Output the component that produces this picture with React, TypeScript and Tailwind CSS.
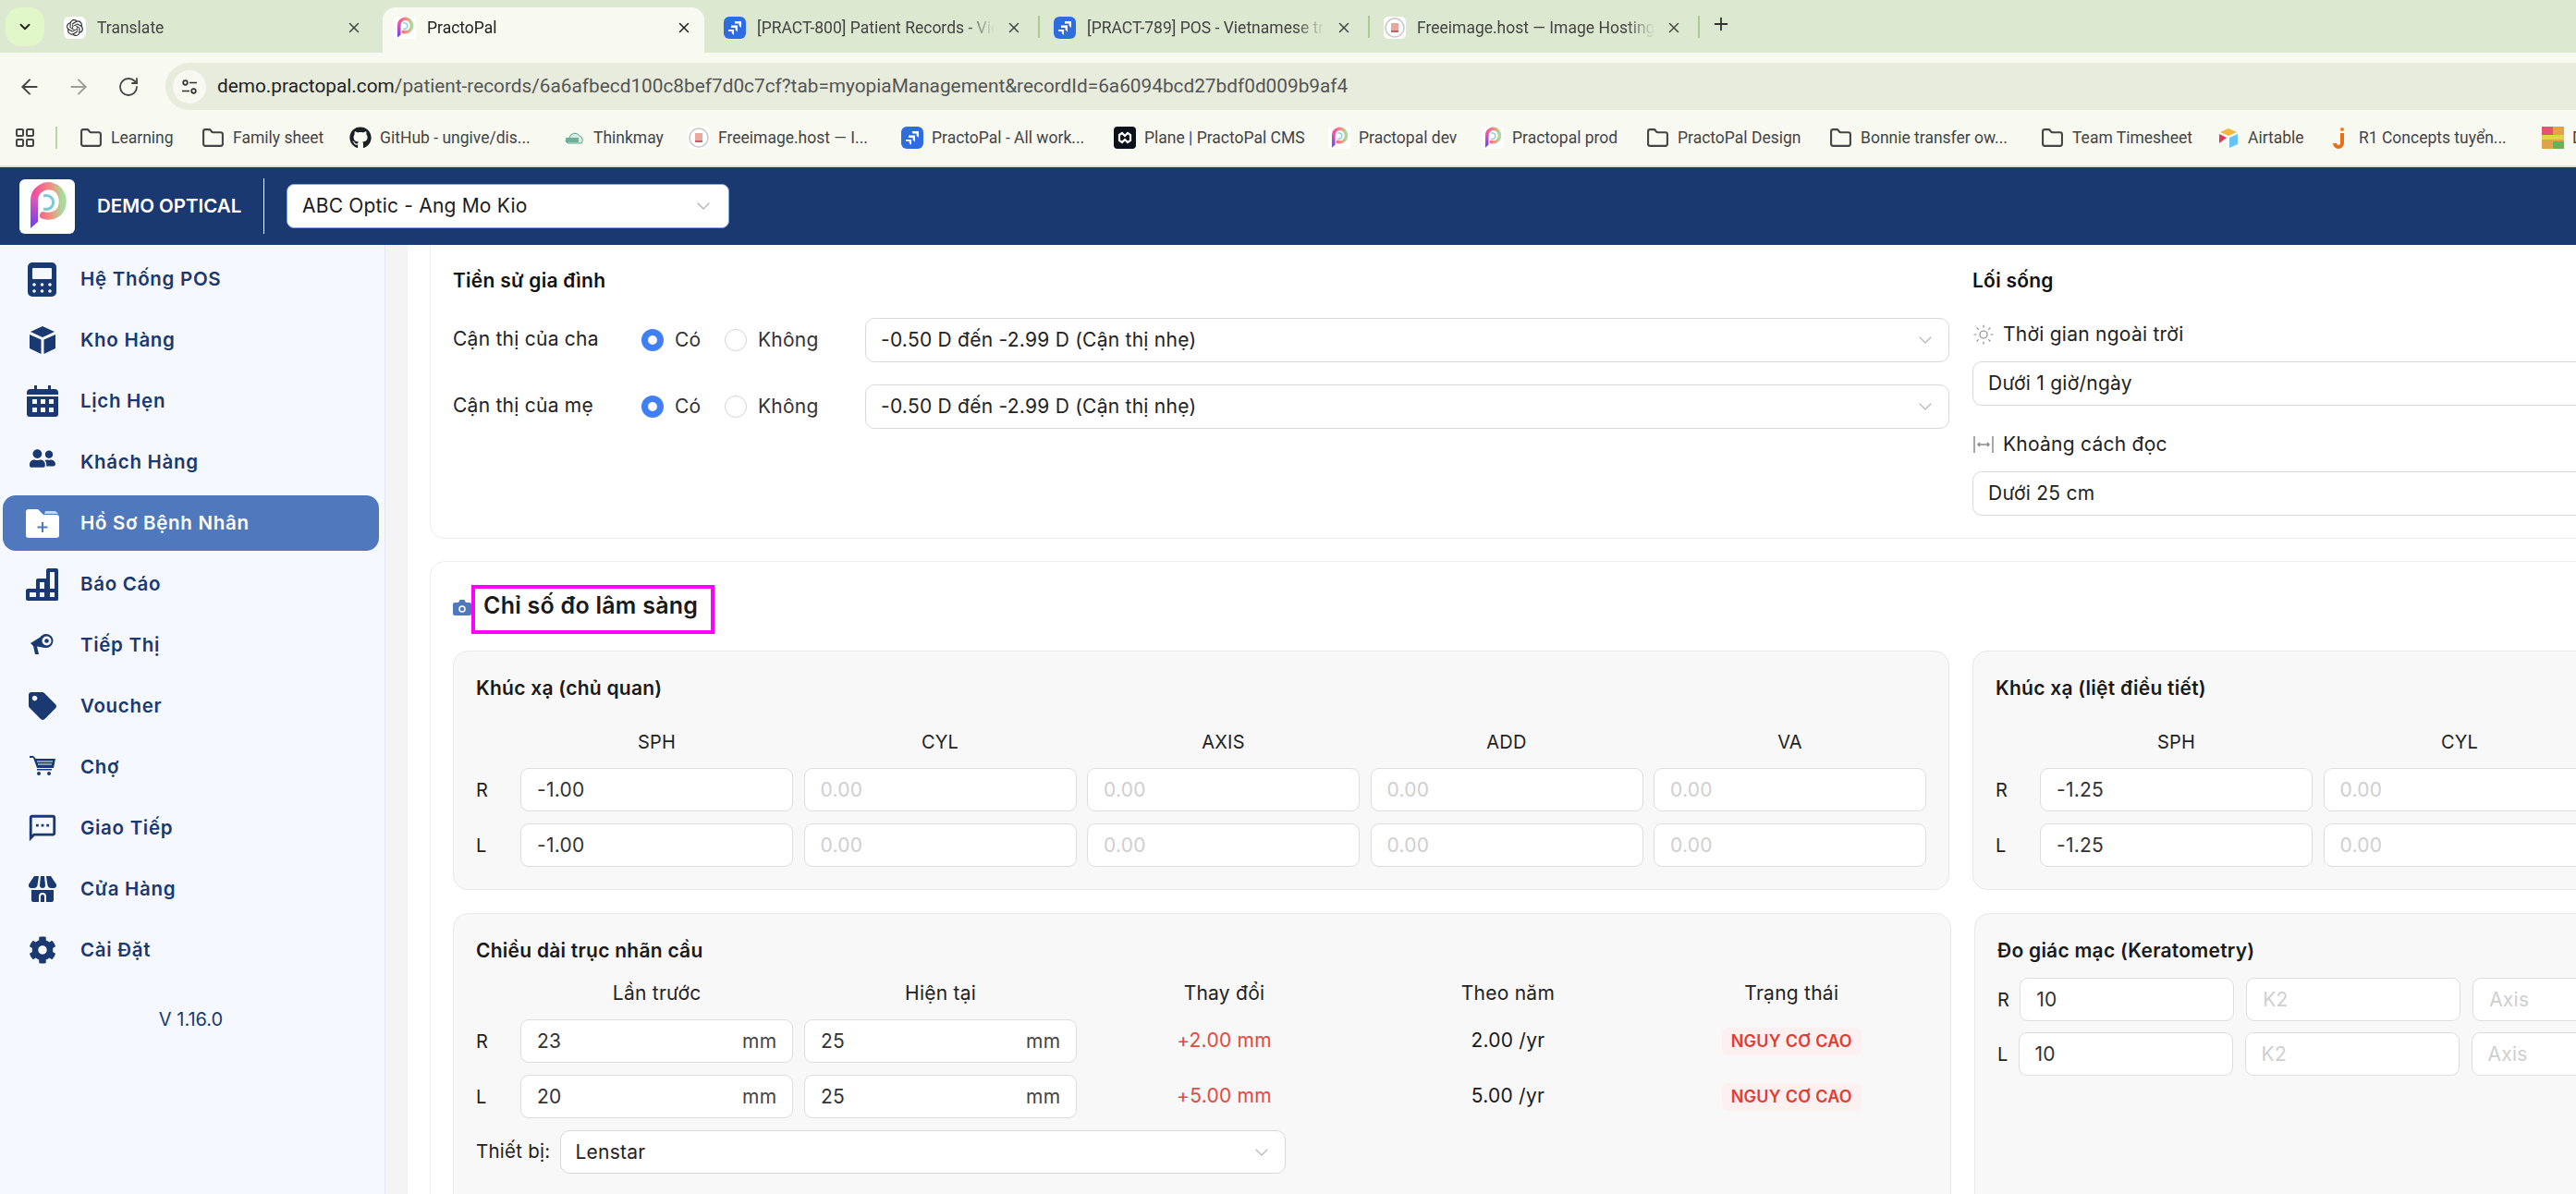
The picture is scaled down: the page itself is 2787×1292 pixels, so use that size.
import React from "react";
import { ArrowLeft, ArrowRight, ChevronDown, Folder, LayoutGrid, Plus, RotateCw, Sun, X } from "lucide-react";
import { FaCog, FaGithub, FaTag, FaUserFriends } from "react-icons/fa";
import { MdOutlineSms } from "react-icons/md";
import { SiOpenai } from "react-icons/si";

const NAVY = "#1a3970";

function PLogo({ className = "" }: { className?: string }) {
  const id = React.useId().replace(/:/g, "");
  return (
    <svg viewBox="9 3 42 54" className={className}>
      <defs>
        <linearGradient id={`a${id}`} x1="0" y1="0" x2="1" y2="0">
          <stop offset="0" stopColor="#ef4f9f" />
          <stop offset="0.55" stopColor="#f58c7b" />
          <stop offset="1" stopColor="#a6dc9b" />
        </linearGradient>
        <linearGradient id={`b${id}`} x1="0" y1="0" x2="0" y2="1">
          <stop offset="0" stopColor="#e45ab1" />
          <stop offset="1" stopColor="#6d3df0" />
        </linearGradient>
      </defs>
      <path d="M16 24C16 12 28 6 36 9C46 12 49 24 45 33C42 40 33 42 26 40" fill="none" stroke={`url(#a${id})`} strokeWidth="8" strokeLinecap="round" />
      <path d="M26 19C34 17 38 23 36 29C34 33 30 34 26 33" fill="none" stroke="#7dc9d8" strokeWidth="3" />
      <path d="M12 24C12 18 20 18 20 24L20 47L12 54Z" fill={`url(#b${id})`} />
    </svg>
  );
}

function JiraIcon() {
  return (
    <svg viewBox="0 0 24 24" className="h-[24px] w-[24px] shrink-0">
      <rect width="24" height="24" rx="6" fill="#2f6ce0" />
      <path d="M12 5h7v7l-2.400-2.200V7.400H12zM8 9.500h7v7l-2.400-2.200v-2.400H8zM5 14h6v6l-2.200-2v-2H5z" fill="#fff" />
    </svg>
  );
}

function FreeImg() {
  return (
    <svg viewBox="0 0 24 24" className="h-[24px] w-[24px] shrink-0">
      <rect width="24" height="24" rx="5" fill="#fff" />
      <circle cx="12" cy="12" r="10" fill="#fff" stroke="#c9c9c9" strokeWidth="1.500" />
      <rect x="8" y="7" width="8" height="10" fill="#e8a8a0" />
      <rect x="8" y="15" width="8" height="2" fill="#b66" />
    </svg>
  );
}

function PFav() {
  return (
    <span className="flex h-[24px] w-[24px] shrink-0 items-center justify-center rounded-[4px] bg-white">
      <PLogo className="h-[24px] w-[20px]" />
    </span>
  );
}

const tabs = [
  { t: "Translate", i: <span className="flex h-[24px] w-[24px] shrink-0 items-center justify-center rounded-[6px] bg-white"><SiOpenai size={18} color="#333" /></span> },
  { t: "PractoPal", i: <PFav />, active: true },
  { t: "[PRACT-800] Patient Records - Vietnamese", i: <JiraIcon />, sep: true },
  { t: "[PRACT-789] POS - Vietnamese translation", i: <JiraIcon />, sep: true },
  { t: "Freeimage.host — Image Hosting", i: <FreeImg />, sep: true },
];

function TabStrip() {
  return (
    <div className="flex h-[57px] shrink-0 items-start bg-[#dce8d0] pt-[8px] pl-[6px]">
      <div className="mr-[9px] flex h-[42px] w-[42px] shrink-0 items-center justify-center rounded-[16px] bg-[#e2f7c9]">
        <ChevronDown size={18} strokeWidth={2.5} color="#222" />
      </div>
      {tabs.map((tab) => (
        <React.Fragment key={tab.t}>
          <div className={`flex h-[49px] w-[348px] shrink-0 items-center gap-[12px] rounded-t-[14px] pr-[13px] pb-[5px] pl-[12px] ${tab.active ? "bg-[#f8faf2]" : ""}`}>
            {tab.i}
            <span className={`min-w-0 flex-1 overflow-hidden text-[17.500px] whitespace-nowrap [font-family:Roboto,sans-serif] [mask-image:linear-gradient(to_right,black_88%,transparent)] ${tab.active ? "text-[#222]" : "text-[#444]"}`}>{tab.t}</span>
            <X size={18} strokeWidth={2} color={tab.active ? "#222" : "#444"} />
          </div>
          <div className="flex h-[33px] w-[9px] shrink-0 items-center justify-center pt-[9px]">
            {tab.sep && <div className="h-[24px] w-[2px] bg-[#a9cd8f]" />}
          </div>
        </React.Fragment>
      ))}
      <div className="ml-[9px] flex h-[33px] items-center pt-[3px]">
        <Plus size={22} strokeWidth={2} color="#333" />
      </div>
    </div>
  );
}

function Toolbar() {
  return (
    <div className="flex h-[62px] shrink-0 items-start bg-[#f8faf2] pt-[11px]">
      <div className="flex h-[51px] w-[179px] shrink-0 items-center pl-[19px]">
        <ArrowLeft size={26} strokeWidth={1.8} color="#444" />
        <ArrowRight size={26} strokeWidth={1.8} color="#9aa095" className="ml-[27px]" />
        <RotateCw size={24} strokeWidth={1.8} color="#444" className="ml-[29px]" />
      </div>
      <div className="flex h-[51px] flex-1 items-center rounded-l-full bg-[#e7ecdd] pl-[8px]">
        <span className="flex h-[36px] w-[36px] items-center justify-center rounded-full bg-[#f8faf2]">
          <svg viewBox="0 0 20 20" className="h-[20px] w-[20px]" fill="none" stroke="#333" strokeWidth="1.700">
            <circle cx="5.500" cy="5.500" r="2.300" />
            <path d="M10 5.500h8M2 14.500h8" />
            <circle cx="14.500" cy="14.500" r="2.300" />
          </svg>
        </span>
        <span className="ml-[12px] text-[20.800px] whitespace-nowrap text-[#222] [font-family:Roboto,sans-serif]">
          demo.practopal.com<span className="text-[#555]">/patient-records/6a6afbecd100c8bef7d0c7cf?tab=myopiaManagement&recordId=6a6094bcd27bdf0d009b9af4</span>
        </span>
      </div>
    </div>
  );
}

const folder = <Folder size={25} strokeWidth={2} color="#444" className="shrink-0" />;

const bookmarks = [
  { w: "w-[132px]", i: folder, t: "Learning" },
  { w: "w-[160px]", i: folder, t: "Family sheet" },
  { w: "w-[231px]", i: <FaGithub size={24} color="#1b1f23" className="shrink-0" />, t: "GitHub - ungive/dis..." },
  { w: "w-[135px]", i: <svg viewBox="0 0 24 24" className="h-[24px] w-[24px] shrink-0"><path d="M3 16a4 4 0 0 1 4-4 6 6 0 0 1 11-2 5 5 0 0 1 2 8H5z" fill="#d7ece2" stroke="#59a98d" /><rect x="3" y="12" width="14" height="5" fill="#6fae97" /></svg>, t: "Thinkmay" },
  { w: "w-[231px]", i: <FreeImg />, t: "Freeimage.host — I..." },
  { w: "w-[230px]", i: <JiraIcon />, t: "PractoPal - All work..." },
  { w: "w-[232px]", i: <svg viewBox="0 0 24 24" className="h-[24px] w-[24px] shrink-0"><rect width="24" height="24" rx="4" fill="#0b1219" /><path d="M6 9l3-2 3 3 3-3 3 2v6l-3 2-3-3-3 3-3-2z" fill="none" stroke="#fff" strokeWidth="2.200" /></svg>, t: "Plane | PractoPal CMS" },
  { w: "w-[166px]", i: <PFav />, t: "Practopal dev" },
  { w: "w-[178px]", i: <PFav />, t: "Practopal prod" },
  { w: "w-[198px]", i: folder, t: "PractoPal Design" },
  { w: "w-[229px]", i: folder, t: "Bonnie transfer ow..." },
  { w: "w-[191px]", i: folder, t: "Team Timesheet" },
  { w: "w-[120px]", i: <svg viewBox="0 0 24 24" className="h-[24px] w-[24px] shrink-0"><path d="M12 2l9 4-9 4-9-4z" fill="#f4b63e" /><path d="M13 12l9-4v11l-9 4z" fill="#64c4f5" /><path d="M2 8l8 4-8 6z" fill="#e3365f" /></svg>, t: "Airtable" },
  { w: "w-[231px]", i: <svg viewBox="0 0 24 24" className="h-[26px] w-[24px] shrink-0"><circle cx="15" cy="3" r="2" fill="#f07a22" /><path d="M15 7v11a4 4 0 0 1-8 0" fill="none" stroke="#e86f1c" strokeWidth="4" /></svg>, t: "R1 Concepts tuyển..." },
  { w: "w-[60px]", i: <svg viewBox="0 0 24 24" className="h-[24px] w-[24px] shrink-0"><rect width="24" height="24" fill="#e3a24a" /><rect width="12" height="10" fill="#e0566a" /><rect x="12" y="16" width="12" height="8" fill="#69b158" /><rect y="9" width="24" height="5" fill="#e2d34a" /></svg>, t: "Docs" },
];

function BookmarkBar() {
  return (
    <div className="flex h-[62px] shrink-0 items-start overflow-hidden border-b-2 border-[#dcdcd8] bg-[#f8faf2]">
      <div className="flex h-[60px] shrink-0 items-center pl-[15px]">
        <LayoutGrid size={24} strokeWidth={2} color="#444" />
        <div className="mr-[24px] ml-[21px] h-[24px] w-[2px] bg-[#b7d89e]" />
      </div>
      {bookmarks.map((b) => (
        <div key={b.t} className={`flex h-[60px] shrink-0 items-center gap-[9px] ${b.w}`}>
          {b.i}
          <span className="text-[17.500px] whitespace-nowrap text-[#444] [font-family:Roboto,sans-serif]">{b.t}</span>
        </div>
      ))}
    </div>
  );
}

function AppHeader() {
  return (
    <div className="flex h-[84px] shrink-0 items-center bg-[#1a3970] pl-[21px] [font-family:Inter,sans-serif]">
      <div className="flex h-[59px] w-[60px] items-center justify-center rounded-[6px] bg-white">
        <PLogo className="h-[54px] w-[44px]" />
      </div>
      <span className="ml-[24px] w-[156px] text-[20.500px] font-semibold tracking-[0px] whitespace-nowrap text-white">DEMO OPTICAL</span>
      <div className="ml-[24px] h-[60px] w-[1px] bg-white" />
      <div className="ml-[24px] flex h-[48px] w-[479px] items-center justify-between rounded-[8px] border border-[#7fa4e0] bg-white pr-[15px] pl-[16px]">
        <span className="text-[21px] tracking-[0.2px] text-[#1b1b1b]">ABC Optic - Ang Mo Kio</span>
        <ChevronDown size={24} strokeWidth={1.1} color="#aaa" />
      </div>
    </div>
  );
}

const ic = "h-full w-full";
const nav: { t: string; box: string; i: React.ReactNode; active?: boolean }[] = [
  { t: "Hệ Thống POS", box: "h-[37px] w-[31px]", i: <svg viewBox="0 0 31 37" className={ic}><rect width="31" height="37" rx="5" fill={NAVY} /><rect x="5" y="6" width="21" height="12" rx="1" fill="#f5f8ff" />{[7, 15.5, 24].map((x) => [24, 31].map((y) => <circle key={`${x}${y}`} cx={x} cy={y} r="1.800" fill="#f5f8ff" />))}</svg> },
  { t: "Kho Hàng", box: "h-[30px] w-[28px]", i: <svg viewBox="0 0 28 30" className={ic} fill={NAVY}><path d="M14 0l13 6-13 6L1 6z" /><path d="M0 9l12.500 5.500V30L0 24z" /><path d="M28 9l-12.500 5.500V30L28 24z" /></svg> },
  { t: "Lịch Hẹn", box: "h-[34px] w-[34px]", i: <svg viewBox="0 0 34 34" className={ic}><rect x="8" y="0" width="3" height="6" fill={NAVY} /><rect x="23" y="0" width="3" height="6" fill={NAVY} /><path d="M0 8a4 4 0 0 1 4-4h26a4 4 0 0 1 4 4v2H0z" fill={NAVY} /><path d="M0 12h34v19a3 3 0 0 1-3 3H3a3 3 0 0 1-3-3z" fill={NAVY} />{[6, 15, 24].map((x) => [15, 24].map((y) => <rect key={`${x}${y}`} x={x} y={y} width="5" height="5" fill="#f5f8ff" />))}</svg> },
  { t: "Khách Hàng", box: "h-[24px] w-[28px] -mt-[8px]", i: <FaUserFriends className={ic} color={NAVY} /> },
  { t: "Hồ Sơ Bệnh Nhân", active: true, box: "h-[31px] w-[36px]", i: <svg viewBox="0 0 36 31" className={ic}><path d="M0 3a3 3 0 0 1 3-3h10l6 6h14a3 3 0 0 1 3 3v19a3 3 0 0 1-3 3H3a3 3 0 0 1-3-3z" fill="#fff" /><path d="M21 2h11l3 3H20z" fill="#fff" opacity=".7" /><path d="M18 14v11M12.500 19.500h11" stroke="#4f79bc" strokeWidth="2" /></svg> },
  { t: "Báo Cáo", box: "h-[35px] w-[35px]", i: <svg viewBox="0 0 35 35" className={ic} fill="none" stroke={NAVY} strokeWidth="4" strokeLinejoin="round"><rect x="2" y="24" width="31" height="9" /><rect x="13" y="13" width="9" height="20" /><rect x="24" y="2" width="9" height="31" /></svg> },
  { t: "Tiếp Thị", box: "h-[24px] w-[25px] -mt-[2px]", i: <svg viewBox="0 0 25 24" className={ic}><path d="M0 11L16 1v15L7 14.500 9 23H5L3 14z" fill={NAVY} /><circle cx="17" cy="8.500" r="7.500" fill={NAVY} /><circle cx="17.500" cy="8.500" r="5" fill="#f5f8ff" /><circle cx="17.500" cy="8.500" r="2.300" fill={NAVY} /></svg> },
  { t: "Voucher", box: "h-[30px] w-[30px]", i: <FaTag className={ic} color={NAVY} /> },
  { t: "Chợ", box: "h-[22px] w-[28px] -mt-[4px]", i: <svg viewBox="0 0 28 22" className={ic}><path d="M0 1h4l3 3h21l-2 10H8L4 3H0z" fill={NAVY} /><path d="M8 7h17M9 10h15" stroke="#f5f8ff" strokeWidth="1" /><rect x="8" y="15" width="16" height="1.500" fill={NAVY} /><circle cx="10" cy="20" r="2" fill={NAVY} /><circle cx="21" cy="20" r="2" fill={NAVY} /></svg> },
  { t: "Giao Tiếp", box: "h-[34px] w-[34px]", i: <MdOutlineSms className={ic} color={NAVY} /> },
  { t: "Cửa Hàng", box: "h-[28px] w-[30px]", i: <svg viewBox="0 0 30 28" className={ic} fill={NAVY}><path d="M6 0h5l-1.500 10a4 4 0 0 1-4 3H3a3 3 0 0 1-3-4z" /><path d="M13 0h4l1 10a3 3 0 0 1-6 0z" /><path d="M19 0h5l6 9a3 3 0 0 1-3 4h-2.500a4 4 0 0 1-4-3z" /><path d="M3 15h24v11a2 2 0 0 1-2 2H5a2 2 0 0 1-2-2z" /><path d="M11 28v-6a4 4 0 0 1 8 0v6h-2v-6a2 2 0 0 0-4 0v6z" fill="#f5f8ff" /></svg> },
  { t: "Cài Đặt", box: "h-[30px] w-[30px]", i: <FaCog className={ic} color={NAVY} /> },
];

function Sidebar() {
  return (
    <aside className="flex w-[417px] shrink-0 flex-col border-r border-[#e4e6f0] bg-[#f5f8ff] pt-[4px] [font-family:Inter,sans-serif]">
      {nav.map((n) => (
        <div key={n.t} className="flex h-[66px] items-center pr-[6px] pl-[3px]">
          <div className={`flex h-[60px] w-full items-center gap-[24px] rounded-[14px] pl-[25px] ${n.active ? "bg-[#4f79bc] text-white" : "text-[#1a3970]"}`}>
            <span className="flex w-[35px] shrink-0 items-center justify-center">
              <span className={`block shrink-0 ${n.box}`}>{n.i}</span>
            </span>
            <span className="text-[20.500px] font-semibold tracking-[0.700px] whitespace-nowrap">{n.t}</span>
          </div>
        </div>
      ))}
      <div className="mt-[28px] pr-[3px] text-center text-[20px] leading-[28px] text-[#1a3970]">V 1.16.0</div>
    </aside>
  );
}

function Select({ text, className = "" }: { text: string; className?: string }) {
  return (
    <div className={`flex items-center justify-between rounded-[10px] border border-[#d9d9d9] bg-white pr-[13px] pl-[16px] ${className}`}>
      <span className="text-[21px] whitespace-nowrap text-[#222]">{text}</span>
      <ChevronDown size={24} strokeWidth={1.1} color="#b5b5b5" />
    </div>
  );
}

function Radio({ on }: { on?: boolean }) {
  return on ? (
    <span className="block h-[24px] w-[24px] shrink-0 rounded-full border-[7px] border-[#3f80f6] bg-white" />
  ) : (
    <span className="block h-[24px] w-[24px] shrink-0 rounded-full border border-[#d4d4d4] bg-white" />
  );
}

function FamilyRow({ label }: { label: string }) {
  return (
    <div className="flex h-[48px] items-center">
      <span className="-mt-[2px] w-[204px] shrink-0 text-[21px] text-[#222]">{label}</span>
      <div className="flex w-[90px] shrink-0 items-center gap-[12px]">
        <Radio on />
        <span className="text-[21px] text-[#333]">Có</span>
      </div>
      <div className="flex w-[152px] shrink-0 items-center gap-[12px]">
        <Radio />
        <span className="text-[21px] text-[#333]">Không</span>
      </div>
      <Select text="-0.50 D đến -2.99 D (Cận thị nhẹ)" className="h-[48px] flex-1" />
    </div>
  );
}

function Card1() {
  return (
    <section className="-mt-[20px] flex gap-[25px] rounded-[16px] border border-[#ededed] bg-white pt-[43px] pr-[24px] pb-[24px] pl-[24px]">
      <div className="w-[1619px] shrink-0">
        <h3 className="flex h-[30px] items-center text-[21px] font-semibold text-[#111]">Tiền sử gia đình</h3>
        <div className="mt-[25px] flex flex-col gap-[24px]">
          <FamilyRow label="Cận thị của cha" />
          <FamilyRow label="Cận thị của mẹ" />
        </div>
      </div>
      <div className="flex-1">
        <h3 className="flex h-[30px] items-center text-[21px] font-semibold text-[#111]">Lối sống</h3>
        <div className="mt-[28px] flex h-[30px] items-center gap-[9px] text-[21px] text-[#222]">
          <Sun size={24} strokeWidth={1.2} color="#8a8a8a" />
          Thời gian ngoài trời
        </div>
        <Select text="Dưới 1 giờ/ngày" className="mt-[14px] h-[48px]" />
        <div className="mt-[27px] flex h-[30px] items-center gap-[9px] text-[21px] text-[#222]">
          <svg viewBox="0 0 24 24" className="h-[24px] w-[24px]" fill="none" stroke="#8a8a8a" strokeWidth="1.500">
            <path d="M2 3v18M22 3v18M6 12h12M8 10l-2 2 2 2M16 10l2 2-2 2" />
          </svg>
          Khoảng cách đọc
        </div>
        <Select text="Dưới 25 cm" className="mt-[14px] h-[48px]" />
      </div>
    </section>
  );
}

function Field({ v, ph, unit, className = "" }: { v?: string; ph?: string; unit?: string; className?: string }) {
  return (
    <div className={`flex items-center justify-between rounded-[9px] border border-[#dedede] bg-white pr-[17px] pl-[17px] text-[21px] ${className}`}>
      <span className={v ? "text-[#333]" : "text-[#cfcfcf]"}>{v ?? ph}</span>
      {unit && <span className="text-[#444]">{unit}</span>}
    </div>
  );
}

function Refraction({ title, value }: { title: string; value: string }) {
  const heads = ["SPH", "CYL", "AXIS", "ADD", "VA"];
  return (
    <div className="w-[1619px] shrink-0 rounded-[16px] border border-[#e8e8e8] bg-[#f8f8f8] pt-[25px] pr-[24px] pb-[24px] pl-[24px]">
      <h4 className="flex h-[30px] items-center text-[21px] font-semibold text-[#1a1a1a]">{title}</h4>
      <div className="mt-[28px] grid grid-cols-[36.5px_repeat(5,1fr)] gap-x-[11.5px] gap-y-[13px]">
        <div className="h-[30px]" />
        {heads.map((h) => (
          <div key={h} className="flex h-[30px] items-center justify-center text-[20px] text-[#222]">{h}</div>
        ))}
        {["R", "L"].map((side) => (
          <React.Fragment key={side}>
            <div className="flex items-center text-[20px] text-[#222]">{side}</div>
            <Field v={value} className="h-[47px]" />
            {heads.slice(1).map((h) => (
              <Field key={h} ph="0.00" className="h-[47px]" />
            ))}
          </React.Fragment>
        ))}
      </div>
    </div>
  );
}

function Risk() {
  return (
    <div className="flex items-center justify-center">
      <span className="flex h-[30px] w-[151px] items-center justify-center rounded-[7px] bg-[#fdf0f0] text-[18px] font-semibold text-[#e23c32]">NGUY CƠ CAO</span>
    </div>
  );
}

function AxialLength() {
  const rows = [
    { s: "R", a: "23", b: "25", c: "+2.00 mm", d: "2.00 /yr" },
    { s: "L", a: "20", b: "25", c: "+5.00 mm", d: "5.00 /yr" },
  ];
  return (
    <div className="h-[420px] w-[1621px] shrink-0 rounded-[16px] border border-[#e8e8e8] bg-[#f8f8f8] pt-[25px] pr-[24px] pl-[24px]">
      <h4 className="flex h-[30px] items-center text-[21px] font-semibold text-[#1a1a1a]">Chiều dài trục nhãn cầu</h4>
      <div className="mt-[16px] grid grid-cols-[36.5px_repeat(5,1fr)] gap-x-[11.5px] gap-y-[13px]">
        <div className="h-[30px]" />
        {["Lần trước", "Hiện tại", "Thay đổi", "Theo năm", "Trạng thái"].map((h) => (
          <div key={h} className="flex h-[30px] items-center justify-center text-[21px] text-[#222]">{h}</div>
        ))}
        {rows.map((r) => (
          <React.Fragment key={r.s}>
            <div className="flex items-center text-[20px] text-[#222]">{r.s}</div>
            <Field v={r.a} unit="mm" className="h-[47px]" />
            <Field v={r.b} unit="mm" className="h-[47px]" />
            <div className="-mt-[2px] flex items-center justify-center text-[21px] text-[#e5483d]">{r.c}</div>
            <div className="-mt-[2px] flex items-center justify-center text-[21px] text-[#1a1a1a]">{r.d}</div>
            <Risk />
          </React.Fragment>
        ))}
      </div>
      <div className="mt-[13px] flex items-center">
        <span className="w-[90.5px] shrink-0 text-[20.500px] text-[#222]">Thiết bị:</span>
        <Select text="Lenstar" className="h-[47px] w-[785px]" />
      </div>
    </div>
  );
}

function Keratometry() {
  return (
    <div className="h-[420px] w-[1200px] shrink-0 rounded-[16px] border border-[#e8e8e8] bg-[#f8f8f8] pt-[25px] pr-[24px] pl-[24px]">
      <h4 className="flex h-[30px] items-center text-[21px] font-semibold text-[#1a1a1a]">Đo giác mạc (Keratometry)</h4>
      <div className="mt-[14px] flex flex-col gap-[12px]">
        {["R", "L"].map((s) => (
          <div key={s} className="flex items-center gap-[11px] text-[20px] text-[#222]">
            <span>{s}</span>
            <div className="flex gap-[13px]">
              <Field v="10" className="h-[47px] w-[232px]" />
              <Field ph="K2" className="h-[47px] w-[232px]" />
              <Field ph="Axis" className="h-[47px] w-[232px]" />
            </div>
          </div>
        ))}
      </div>
    </div>
  );
}

function Card2() {
  return (
    <section className="mt-[24px] rounded-t-[16px] border border-[#ededed] bg-white pt-[25px] pl-[24px]">
      <div className="flex items-center">
        <svg viewBox="0 0 20 17" className="-mt-[4px] h-[17px] w-[20px] shrink-0">
          <path d="M2 3h4l1.500-3h5L14 3h4a2 2 0 0 1 2 2v10a2 2 0 0 1-2 2H2a2 2 0 0 1-2-2V5a2 2 0 0 1 2-2z" fill="#4f79bc" />
          <circle cx="10" cy="10" r="3" fill="none" stroke="#fff" strokeWidth="1.500" />
        </svg>
        <div className="flex h-[53px] w-[263px] items-center border-4 border-[#ff00ff] pb-[8px] pl-[9px]">
          <h2 className="text-[25px] font-semibold whitespace-nowrap text-[#1a1a1a]">Chỉ số đo lâm sàng</h2>
        </div>
      </div>
      <div className="mt-[18px] flex gap-[25px]">
        <Refraction title="Khúc xạ (chủ quan)" value="-1.00" />
        <Refraction title="Khúc xạ (liệt điều tiết)" value="-1.25" />
      </div>
      <div className="mt-[25px] flex gap-[25px]">
        <AxialLength />
        <Keratometry />
      </div>
    </section>
  );
}

export default function App() {
  return (
    <div className="flex h-[1292px] w-[2787px] flex-col overflow-hidden bg-white">
      <TabStrip />
      <Toolbar />
      <BookmarkBar />
      <AppHeader />
      <div className="flex min-h-0 flex-1">
        <Sidebar />
        <div className="w-[24px] shrink-0 bg-[#f4f4f4]" />
        <main className="min-w-0 flex-1 overflow-hidden bg-white pl-[24px] tracking-[0.25px] [font-family:Inter,sans-serif]">
          <div className="w-[3400px]">
            <Card1 />
            <Card2 />
          </div>
        </main>
      </div>
    </div>
  );
}
